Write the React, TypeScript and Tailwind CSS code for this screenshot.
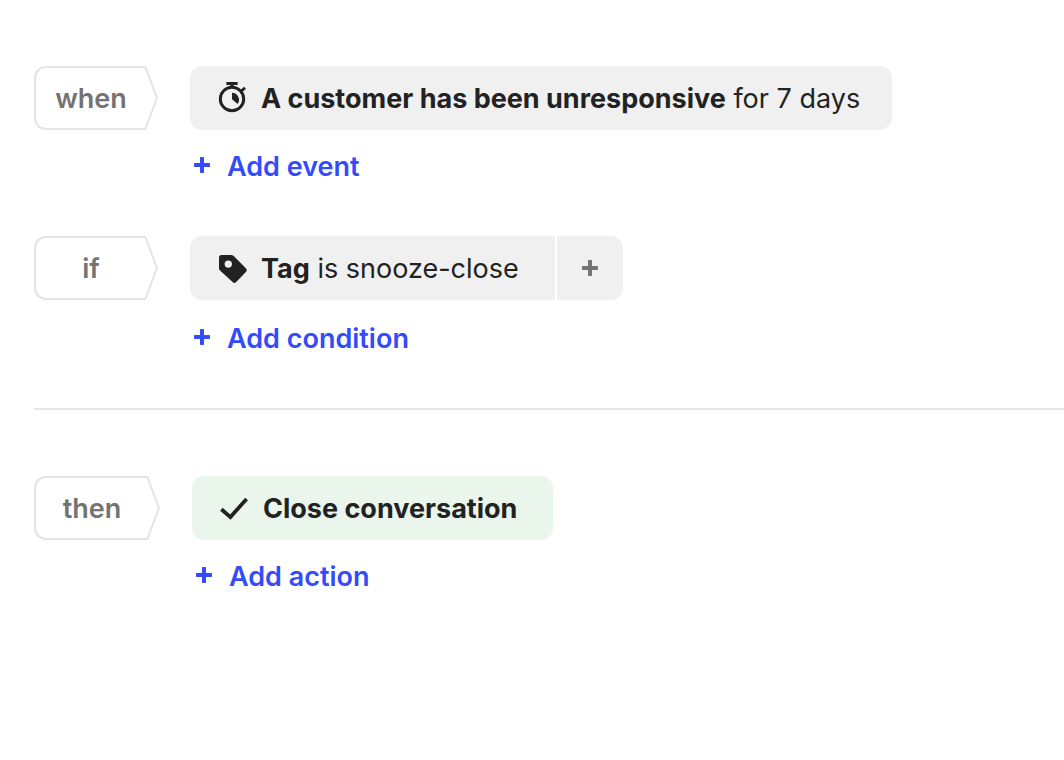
import type { ReactNode } from "react";
import clsx from "clsx";

function PlusIcon({ className }: { className?: string }) {
  return (
    <svg viewBox="0 0 16 16" className={clsx("size-4 shrink-0", className)} fill="currentColor" aria-hidden="true">
      <path d="M6.7 0h2.6q.7 0 .7.7V6h5.3q.7 0 .7.7v2.6q0 .7-.7.7H10v5.3q0 .7-.7.7H6.7q-.7 0-.7-.7V10H.7q-.7 0-.7-.7V6.7Q0 6 .7 6H6V.7q0-.7.7-.7z" />
    </svg>
  );
}

function StopwatchIcon() {
  return (
    <svg viewBox="0 0 28 32" className="h-8 w-7 shrink-0" fill="none" aria-hidden="true">
      <circle cx="14" cy="17" r="11.7" stroke="currentColor" strokeWidth="3" />
      <path d="M9 0h10q.6 0 .6.6v1.8q0 .6-.6.6H9q-.6 0-.6-.6V.6Q8.4 0 9 0z" fill="currentColor" />
      <path d="M12.4 2h3.200v4h-3.200z" fill="currentColor" />
      <path d="M23 9.400l4-3.600" stroke="currentColor" strokeWidth="2.800" />
      <path d="M14 10.800v6.400l5.600 4.800A7 7 0 0 0 14 10.800z" fill="currentColor" />
    </svg>
  );
}

function TagIcon() {
  return (
    <svg viewBox="-1 -1 28 28" className="size-7 shrink-0 overflow-visible" fill="currentColor" aria-hidden="true">
      <path
        fillRule="evenodd"
        d="M2.6 0h9.6q1.3 0 2.3.8l12.6 12.6q1.6 1.7 0 3.3L17 27.2q-1.6 1.4-3.2 0L.8 15.3Q0 14.400 0 13.200V2.600Q0 0 2.600 0zM9.300 5.400a3.700 3.700 0 1 0 0 7.400a3.700 3.700 0 0 0 0-7.400z"
      />
    </svg>
  );
}

function CheckIcon() {
  return (
    <svg viewBox="0 0 28 28" className="size-7 shrink-0" fill="none" aria-hidden="true">
      <path
        d="M1.400 15.200l9 7.900L26.600 4.900"
        stroke="currentColor"
        strokeWidth="3.800"
      />
    </svg>
  );
}

function StepLabel({ children, wide }: { children: ReactNode; wide?: boolean }) {
  return (
    <div className={clsx("flex h-16 shrink-0", wide ? "w-[126px]" : "w-31")}>
      <div className="flex flex-1 items-center justify-center rounded-l-xl border-2 border-r-0 border-[#e4e4e4] pt-0.5 pl-0.5 font-semibold text-[#737373]">
        {children}
      </div>
      <svg viewBox="0 0 14 64" className="h-16 w-3.5 shrink-0" fill="none" aria-hidden="true">
        <path d="M0 1h1.300L13 32L1.300 63H0" stroke="#e4e4e4" strokeWidth="2" />
      </svg>
    </div>
  );
}

function AddButton({ children }: { children: ReactNode }) {
  return (
    <button type="button" className="flex h-9 items-center gap-[17px] pl-1 font-semibold text-[#334bfa]">
      <PlusIcon className="mb-0.5" />
      <span className="pt-0.5">{children}</span>
    </button>
  );
}

function Chip({ icon, children, className }: { icon: ReactNode; children: ReactNode; className?: string }) {
  return (
    <button
      type="button"
      className={clsx("flex h-16 items-center gap-[15px] pl-7 whitespace-nowrap text-[#222]", className)}
    >
      {icon}
      <span className="pt-0.5">{children}</span>
    </button>
  );
}

export default function App() {
  return (
    <main className="min-h-screen bg-white pt-16.5 pl-8.5 font-['Inter','Liberation_Sans',sans-serif] text-[27px] leading-9">
      <section className="flex items-start gap-8">
        <StepLabel>when</StepLabel>
        <div className="flex flex-col items-start gap-4.5">
          <Chip icon={<StopwatchIcon />} className="rounded-xl bg-[#f0f0f0] pr-8">
            <strong className="font-bold">A customer has been unresponsive</strong> for 7 days
          </Chip>
          <AddButton>Add event</AddButton>
        </div>
      </section>

      <section className="mt-13 flex items-start gap-8">
        <StepLabel>if</StepLabel>
        <div className="flex flex-col items-start gap-5">
          <div className="flex gap-0.5">
            <Chip icon={<TagIcon />} className="rounded-l-xl bg-[#f0f0f0] pr-9">
              <strong className="font-bold">Tag</strong> is snooze-close
            </Chip>
            <button
              type="button"
              aria-label="Add tag condition"
              className="flex h-16 w-16.5 items-center justify-center rounded-r-xl bg-[#f0f0f0] text-[#737373]"
            >
              <PlusIcon />
            </button>
          </div>
          <AddButton>Add condition</AddButton>
        </div>
      </section>

      <hr className="mt-13 border-t-2 border-[#e6e6e6]" />

      <section className="mt-16.5 flex items-start gap-8">
        <StepLabel wide>then</StepLabel>
        <div className="flex flex-col items-start gap-4.5">
          <Chip icon={<CheckIcon />} className="rounded-xl bg-[#eaf6ec] pr-9">
            <strong className="font-bold">Close conversation</strong>
          </Chip>
          <AddButton>Add action</AddButton>
        </div>
      </section>
    </main>
  );
}
